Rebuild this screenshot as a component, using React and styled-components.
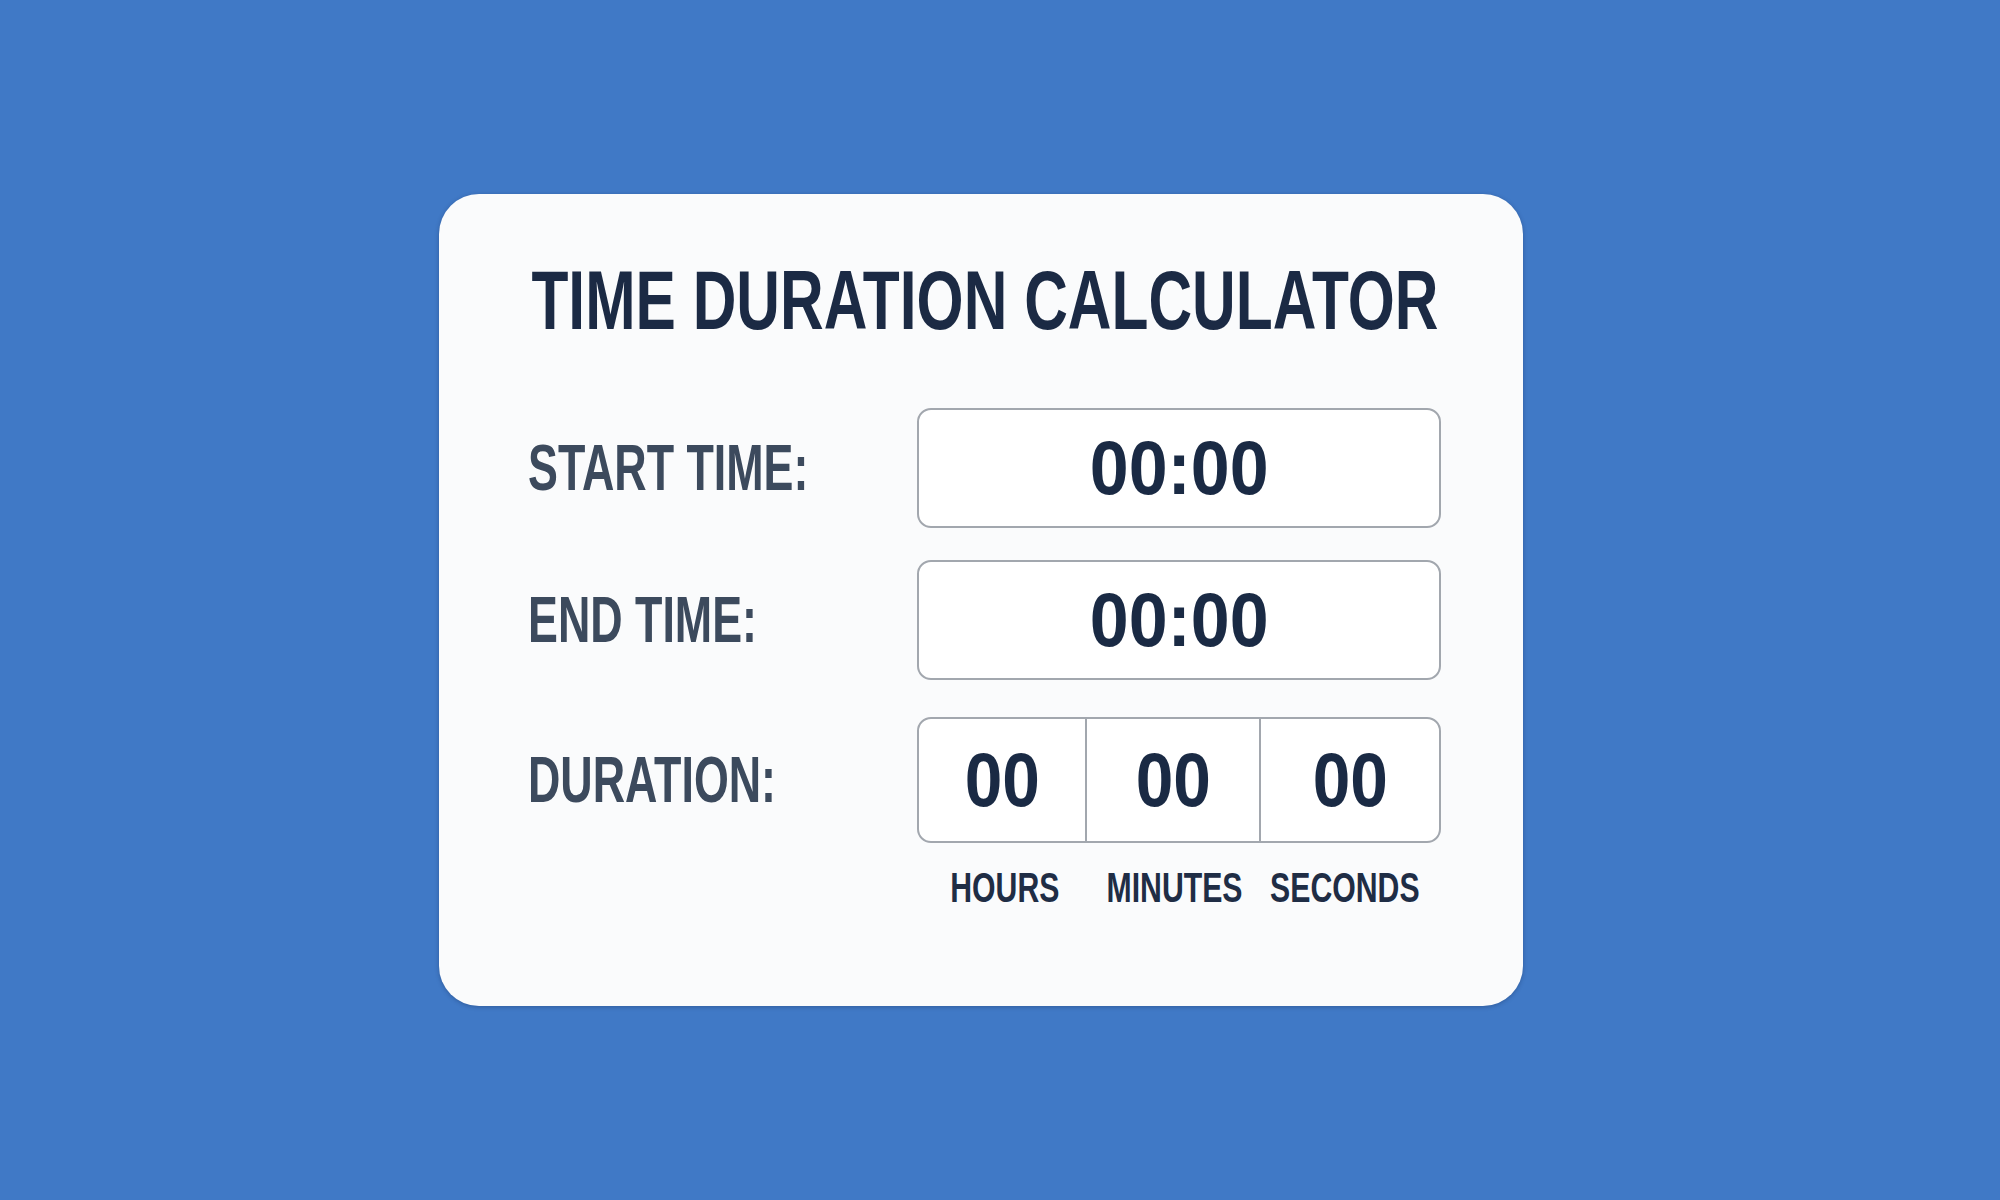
import React from "react"
import styled, { createGlobalStyle } from "styled-components"

const GlobalStyle = createGlobalStyle`
  html,
  body {
    margin: 0;
    background: #4079c6;
  }
`

// Arial metrics squeezed horizontally to get the narrow display face
const Squeeze = styled.span`
  display: inline-block;
  flex-shrink: 0;
  white-space: nowrap;
  transform: scaleX(${(p) => p.$sx});
  transform-origin: ${(p) => (p.$origin === "left" ? "left center" : "center")};
`

const StyledPage = styled.div`
  box-sizing: border-box;
  height: 1200px;
  display: flex;
  align-items: center;
  padding-left: 439px;
  font-family: "Liberation Sans", Arial, sans-serif;
`

const StyledCard = styled.div`
  box-sizing: border-box;
  width: 1084px;
  padding: 64px 82px 97px 89px;
  border-radius: 40px;
  background: #fafbfc;
  box-shadow: 0 1px 4px rgba(20, 40, 80, 0.35);
`

const StyledTitle = styled.h1`
  display: flex;
  justify-content: center;
  margin: 0;
  font-size: 84px;
  font-weight: 700;
  line-height: 1;
  color: #1b2a44;
`

const StyledForm = styled.div`
  display: grid;
  grid-template-columns: 389px 524px;
  row-gap: 32px;
  align-items: center;
  margin-top: 66px;
`

const StyledLabel = styled.div`
  font-size: 64px;
  font-weight: 700;
  line-height: 1;
  color: #3c4a5d;
`

const StyledTimeBox = styled.div`
  box-sizing: border-box;
  height: 120px;
  display: flex;
  align-items: center;
  justify-content: center;
  border: 2px solid #a2a7ae;
  border-radius: 14px;
  background: #fff;
  font-size: 76px;
  font-weight: 700;
  line-height: 1;
  color: #1a2a44;
`

const StyledDurationBox = styled.div`
  box-sizing: border-box;
  height: 126px;
  margin-top: 5px;
  display: grid;
  grid-template-columns: 166px 174px 1fr;
  border: 2px solid #a2a7ae;
  border-radius: 14px;
  background: #fff;
  overflow: hidden;
`

const StyledCell = styled.div`
  display: flex;
  align-items: center;
  justify-content: center;
  border-left: ${(p) => (p.$first ? "none" : "2px solid #a2a7ae")};
  font-size: 76px;
  font-weight: 700;
  line-height: 1;
  color: #1a2a44;
`

const StyledUnits = styled.div`
  grid-column: 2;
  display: grid;
  grid-template-columns: 176px 162px 180px;
  margin-top: -8px;
`

const StyledUnit = styled.div`
  display: flex;
  justify-content: center;
  font-size: 42px;
  font-weight: 700;
  line-height: 1;
  color: #1f2d45;
`

const units = ["HOURS", "MINUTES", "SECONDS"]

const Label = ({ children, ...rest }) => (
  <StyledLabel {...rest}>
    <Squeeze $sx={0.7} $origin="left">
      {children}
    </Squeeze>
  </StyledLabel>
)

const TimeField = ({ value }) => (
  <StyledTimeBox>
    <Squeeze $sx={0.92}>{value}</Squeeze>
  </StyledTimeBox>
)

export default function App() {
  return (
    <>
      <GlobalStyle />
      <StyledPage>
        <StyledCard>
          <StyledTitle>
            <Squeeze $sx={0.72}>TIME DURATION CALCULATOR</Squeeze>
          </StyledTitle>
          <StyledForm>
            <Label>START TIME:</Label>
            <TimeField value="00:00" />
            <Label>END TIME:</Label>
            <TimeField value="00:00" />
            <Label style={{ marginTop: 5 }}>DURATION:</Label>
            <StyledDurationBox>
              {units.map((unit, i) => (
                <StyledCell key={unit} $first={i === 0}>
                  <Squeeze $sx={0.89}>00</Squeeze>
                </StyledCell>
              ))}
            </StyledDurationBox>
            <StyledUnits>
              {units.map((unit) => (
                <StyledUnit key={unit}>
                  <Squeeze $sx={0.72}>{unit}</Squeeze>
                </StyledUnit>
              ))}
            </StyledUnits>
          </StyledForm>
        </StyledCard>
      </StyledPage>
    </>
  )
}
